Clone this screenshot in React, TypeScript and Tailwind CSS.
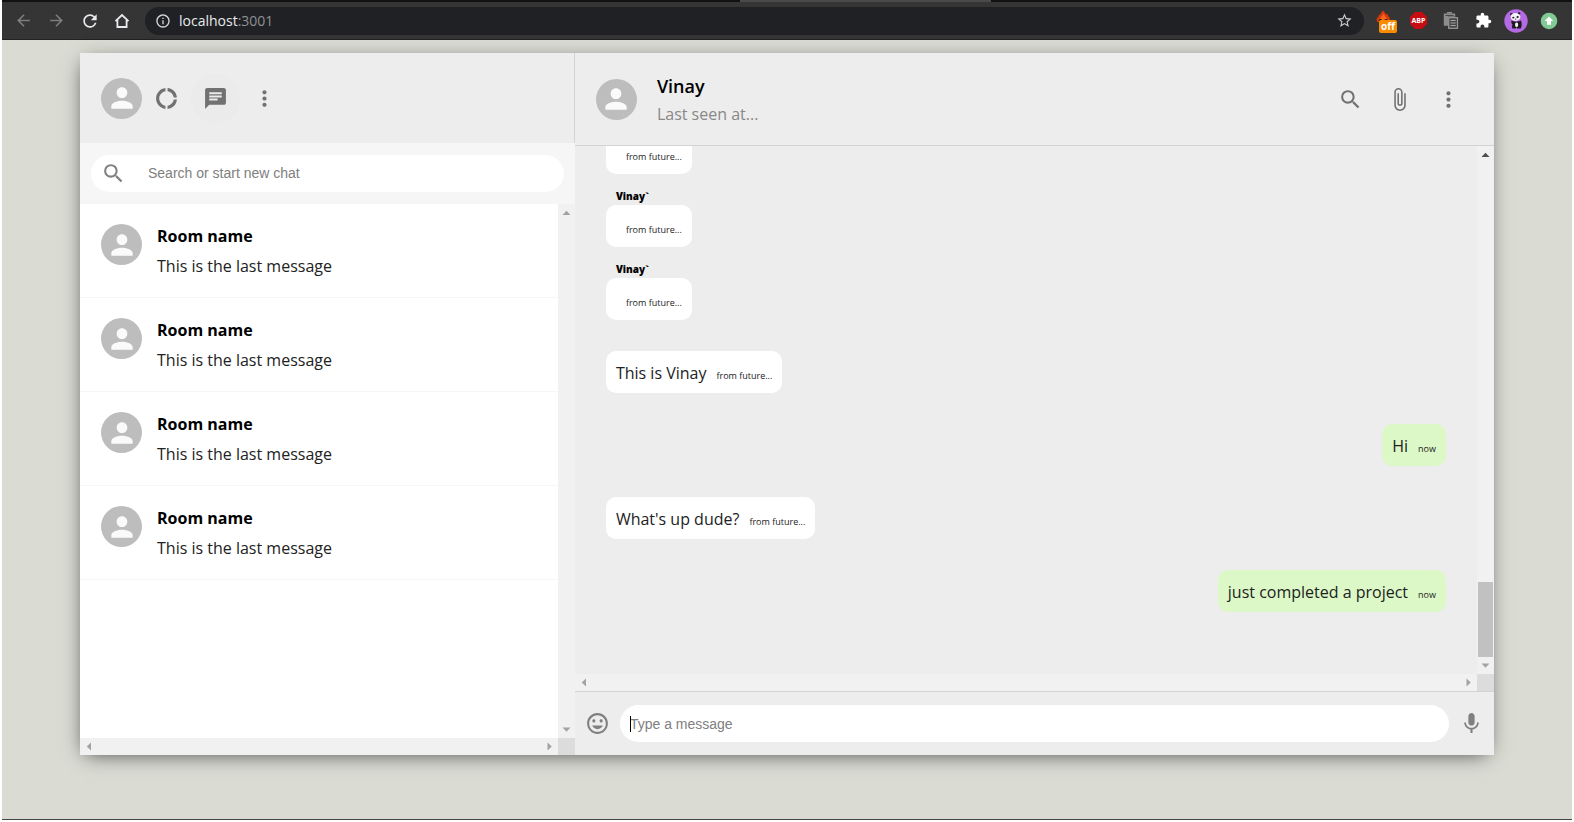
import React from "react";
import {
  MdArrowBack,
  MdArrowForward,
  MdAttachFile,
  MdChat,
  MdExtension,
  MdInfoOutline,
  MdInsertEmoticon,
  MdMic,
  MdMoreVert,
  MdPerson,
  MdRefresh,
  MdSearch,
  MdStarBorder,
} from "react-icons/md";

type Message = { sender?: string; text?: string; time: string; mine?: boolean };

const rooms = [1, 2, 3, 4];

const messages: Message[] = [
  { time: "from future..." },
  { sender: "Vinay`", time: "from future..." },
  { sender: "Vinay`", time: "from future..." },
  { text: "This is Vinay", time: "from future..." },
  { text: "Hi", time: "now", mine: true },
  { text: "What's up dude?", time: "from future..." },
  { text: "just completed a project", time: "now", mine: true },
];

function DonutIcon() {
  return (
    <svg viewBox="0 0 24 24" fill="currentColor" className="size-[25px]" aria-hidden="true">
      <path d="M11 5.08V2c-5 .5-9 4.81-9 10s4 9.5 9 10v-3.08c-3-.48-6-3.4-6-6.92s3-6.44 6-6.92zM18.97 11H22c-.47-5-4-8.53-9-9v3.08C16 5.51 18.54 8 18.97 11zM13 18.92V22c5-.47 8.53-4 9-9h-3.03c-.43 3-2.97 5.49-5.97 5.92z" />
    </svg>
  );
}

function HomeIcon() {
  return (
    <svg viewBox="0 0 16 16" fill="none" stroke="currentColor" strokeWidth="1.8" className="size-4" aria-hidden="true">
      <path d="M1.5 8.2 8 2l6.5 6.2M3.4 7v7h9.2V7" />
    </svg>
  );
}

function FireIcon() {
  return (
    <svg viewBox="0 0 22 24" className="h-6 w-[22px]" aria-hidden="true">
      <path d="M7.300 1.500c.4 1.600 2.200 2.600 3.200 4.300.3-.6.400-1 .4-1.500 1 1.300 1.300 2.500 1.200 3.700.5-.3.800-.6 1-1 .9 2.500.9 4 .4 6H1.200C.4 11.500.6 9.800 1.500 8c.2.700.5 1 .9 1.300-.1-1.800.2-3 1-4.200.1.700.4 1.200.8 1.600C4.300 4.500 5.500 3 7.300 1.500z" fill="#dd3a0a" />
      <path d="M7.400 4.500c.4 1.900 3.300 3 3.600 6.500H3.700c.3-2.500 3.100-4 3.700-6.500z" fill="#f4671c" />
      <path d="M2.500 12c.4-2.700 3.600-2.700 4 0zM8 12c.4-2.700 3.600-2.700 4 0z" fill="#1d1512" />
    </svg>
  );
}

function CopyIcon() {
  return (
    <svg viewBox="0 0 16 18" className="h-[18px] w-4" fill="none" aria-hidden="true">
      <path d="M.8 1.500h11.400v3.200H5v9H.8z" fill="#8c8c8c" />
      <path d="M4 .8h5" stroke="#8c8c8c" strokeWidth="1.600" />
      <path d="M2.500 3.500h8" stroke="#353535" strokeWidth=".8" />
      <rect x="5.700" y="5.700" width="8.800" height="10.600" stroke="#9a9a9a" strokeWidth="1.200" fill="#454545" />
      <path d="M7.500 8.500h5.200M7.500 11h5.200M7.500 13.500h5.200" stroke="#a5a5a5" strokeWidth="1.200" />
    </svg>
  );
}

function PandaIcon() {
  return (
    <svg viewBox="0 0 24 24" className="size-6" aria-hidden="true">
      <circle cx="12" cy="12" r="11.700" fill="#b36ae2" />
      <path d="M7.500 11.500c2 1.500 7 1.500 9.500 0 1 2.500 1 5.500-.2 8h-3.600l-.6-1.500-1 1.500H8.400c-.7-1.500-.2-3 .1-4-1-1-1.500-2.500-1-4z" fill="#1c1a20" />
      <ellipse cx="12.600" cy="15.800" rx="1.600" ry="2.200" fill="#f4f2f6" />
      <circle cx="7.400" cy="5.200" r="1.300" fill="#1c1a20" />
      <circle cx="15" cy="4.500" r="1.300" fill="#1c1a20" />
      <ellipse cx="11.500" cy="8" rx="4.900" ry="3.900" fill="#f4f2f6" />
      <ellipse cx="9.300" cy="8.600" rx="1.100" ry=".9" fill="#1c1a20" />
      <ellipse cx="13.600" cy="8" rx="1.100" ry=".9" fill="#1c1a20" />
      <ellipse cx="11.600" cy="10" rx=".7" ry=".5" fill="#1c1a20" />
    </svg>
  );
}

function UpdateIcon() {
  return (
    <svg viewBox="0 0 18 18" className="size-[18px]" aria-hidden="true">
      <circle cx="9" cy="9" r="8.300" fill="#81c995" />
      <path d="M9 4.500 13.300 9H11v3.800H7V9H4.700z" fill="#fff" />
    </svg>
  );
}

function BrowserBar() {
  return (
    <header className="h-10 shrink-0 border-b border-[#222] bg-[#353535]">
      <div className="flex h-[2px] bg-[#111]">
        <div className="ml-[47%] w-[16%] bg-[#4a4a4a]" />
      </div>
      <div className="flex h-[37px] items-center pr-[14px] pl-3 text-[#e8eaed]">
        <button aria-label="Back" className="mr-[14px] text-[#7d7d7d]">
          <MdArrowBack size={19} />
        </button>
        <button aria-label="Forward" className="mr-[14px] text-[#7d7d7d]">
          <MdArrowForward size={19} />
        </button>
        <button aria-label="Reload" className="mr-[14px]">
          <MdRefresh size={20} />
        </button>
        <button aria-label="Home" className="mr-[15px]">
          <HomeIcon />
        </button>
        <div className="mr-3 flex h-7 flex-1 items-center rounded-full bg-[#202124] pr-[11px] pl-[10px]">
          <MdInfoOutline size={16} className="mr-2 text-[#d5d7da]" />
          <span className="flex-1 text-[14px] leading-5">
            localhost<span className="text-[#8e9195]">:3001</span>
          </span>
          <button aria-label="Bookmark" className="text-[#c8cacd]">
            <MdStarBorder size={17} />
          </button>
        </div>
        <div className="flex items-center gap-3">
          <button aria-label="Blocker off" className="relative">
            <FireIcon />
            <span className="absolute top-[11px] left-[3px] h-[13px] rounded-[2px] bg-[#fb8c00] px-[2px] text-[10px] leading-[13px] font-bold text-white">
              off
            </span>
          </button>
          <button
            aria-label="Ad blocker"
            className="flex size-[17px] items-center justify-center bg-[#c70d12] text-[7px] leading-none font-bold text-white [clip-path:polygon(30%_0,70%_0,100%_30%,100%_70%,70%_100%,30%_100%,0_70%,0_30%)]"
          >
            ABP
          </button>
          <button aria-label="Clipboard" className="ml-1">
            <CopyIcon />
          </button>
          <button aria-label="Extensions" className="ml-1 text-white">
            <MdExtension size={17} />
          </button>
          <button aria-label="Profile">
            <PandaIcon />
          </button>
          <button aria-label="Update">
            <UpdateIcon />
          </button>
        </div>
      </div>
    </header>
  );
}

function Avatar() {
  return (
    <div className="flex size-[41px] shrink-0 items-center justify-center rounded-full bg-[#bdbdbd] text-[#fafafa]">
      <MdPerson size={32} />
    </div>
  );
}

function IconButton({ label, children }: { label: string; children: React.ReactNode }) {
  return (
    <button aria-label={label} className="flex size-[49px] shrink-0 items-center justify-center rounded-full">
      {children}
    </button>
  );
}

function Arrow({ direction, dark }: { direction: "up" | "down" | "left" | "right"; dark?: boolean }) {
  const shapes = {
    up: "M4.500 11h8L8.500 6.700z",
    down: "M4.500 6.500h8L8.500 10.800z",
    left: "M11 4.500v8L6.700 8.500z",
    right: "M6.500 4.500v8L10.800 8.500z",
  };
  return (
    <svg viewBox="0 0 17 17" className="size-[17px] shrink-0" fill={dark ? "#505050" : "#a3a3a3"} aria-hidden="true">
      <path d={shapes[direction]} />
    </svg>
  );
}

function ScrollFrame({ children, thumb }: { children: React.ReactNode; thumb?: boolean }) {
  return (
    <div className="grid min-h-0 flex-1 grid-cols-[minmax(0,1fr)_17px] grid-rows-[minmax(0,1fr)_17px]">
      {children}
      <div className="flex flex-col justify-between bg-[#f1f1f1]">
        <Arrow direction="up" dark={thumb} />
        {thumb && <div className="mx-px mt-auto h-[75px] bg-[#c1c1c1]" />}
        <Arrow direction="down" />
      </div>
      <div className="flex justify-between bg-[#f1f1f1]">
        <Arrow direction="left" />
        <Arrow direction="right" />
      </div>
      <div className="bg-[#dcdcdc]" />
    </div>
  );
}

function Sidebar() {
  return (
    <aside className="flex w-[35%] shrink-0 flex-col">
      <div className="flex h-[90px] shrink-0 items-center border-r border-[#d3d3d3] px-[21px] text-[#717171]">
        <Avatar />
        <IconButton label="Status">
          <DonutIcon />
        </IconButton>
        <button aria-label="New chat" className="flex size-[49px] items-center justify-center rounded-full bg-[#ebebeb]">
          <MdChat size={25} />
        </button>
        <IconButton label="Menu">
          <MdMoreVert size={25} />
        </IconButton>
      </div>
      <div className="shrink-0 bg-[#f6f6f6] px-[11px] py-3">
        <label className="flex h-[37px] items-center rounded-full bg-white px-[10px]">
          <MdSearch size={25} className="shrink-0 text-[#808080]" />
          <input
            aria-label="Search or start new chat"
            placeholder="Search or start new chat"
            className="ml-[22px] min-w-0 flex-1 font-['Liberation_Sans',sans-serif] text-[14px] outline-none placeholder:text-[#808080]"
          />
        </label>
      </div>
      <ScrollFrame>
        <ul className="overflow-hidden bg-white">
          {rooms.map((room) => (
            <li key={room} className="flex h-[94px] gap-[15px] border-b border-[#f6f6f6] px-[21px] py-5">
              <Avatar />
              <div>
                <h2 className="text-[16px] leading-6 font-bold text-black">Room name</h2>
                <p className="mt-[6px] text-[16px] leading-6 text-[#222]">This is the last message</p>
              </div>
            </li>
          ))}
        </ul>
      </ScrollFrame>
    </aside>
  );
}

function Bubble({ sender, text, time, mine }: Message) {
  return (
    <div
      className={`relative mb-[31px] flex h-[42px] shrink-0 items-baseline gap-[10px] rounded-[10px] p-[10px] ${
        mine ? "self-end bg-[#dcf8c6]" : "self-start bg-white"
      }`}
    >
      {sender && (
        <span className="absolute -top-[17px] left-[10px] text-[10px] leading-4 font-extrabold text-black">{sender}</span>
      )}
      <span className="text-[16px] leading-6 text-[#222] before:content-['\200b']">{text}</span>
      <span className="text-[9px] leading-4 text-[#222]">{time}</span>
    </div>
  );
}

function Chat() {
  return (
    <main className="flex min-w-0 flex-1 flex-col">
      <div className="flex h-[93px] shrink-0 items-center border-b border-[#d3d3d3] px-[21px] text-[#717171]">
        <Avatar />
        <div className="flex-1 pl-5">
          <h1 className="text-[18px] leading-7 font-semibold text-black">Vinay</h1>
          <p className="pt-[2px] text-[16px] leading-6 text-[#888]">Last seen at...</p>
        </div>
        <IconButton label="Search messages">
          <MdSearch size={25} />
        </IconButton>
        <IconButton label="Attach file">
          <MdAttachFile size={25} />
        </IconButton>
        <IconButton label="Chat menu">
          <MdMoreVert size={25} />
        </IconButton>
      </div>
      <ScrollFrame thumb>
        <div className="flex flex-col justify-end overflow-hidden px-[31px] pb-[31px]">
          {messages.map((message, index) => (
            <Bubble key={index} {...message} />
          ))}
        </div>
      </ScrollFrame>
      <form className="flex h-16 shrink-0 items-center gap-[10px] border-t border-[#d3d3d3] px-[10px] text-[#808080]">
        <button type="button" aria-label="Emoji">
          <MdInsertEmoticon size={25} />
        </button>
        <div className="relative flex min-w-0 flex-1">
          <input
            aria-label="Type a message"
            placeholder="Type a message"
            className="h-[37px] w-full rounded-full bg-white px-[10px] font-['Liberation_Sans',sans-serif] text-[14px] outline-none placeholder:text-[#808080]"
          />
          <span className="absolute top-[11px] left-[10px] h-4 w-px bg-black" />
        </div>
        <button type="button" aria-label="Voice message">
          <MdMic size={25} />
        </button>
      </form>
    </main>
  );
}

export default function App() {
  return (
    <div className="h-screen bg-white px-[2px] pb-[2px] font-['Open_Sans','Noto_Sans',sans-serif]">
      <div className="flex h-full flex-col border-b border-[#444] bg-[#dadbd3]">
        <BrowserBar />
        <div className="flex min-h-0 flex-1 px-[78px] pt-[13px] pb-16">
          <div className="flex min-w-0 flex-1 bg-[#ededed] shadow-[-1px_4px_20px_-6px_rgba(0,0,0,0.75)]">
            <Sidebar />
            <Chat />
          </div>
        </div>
      </div>
    </div>
  );
}
